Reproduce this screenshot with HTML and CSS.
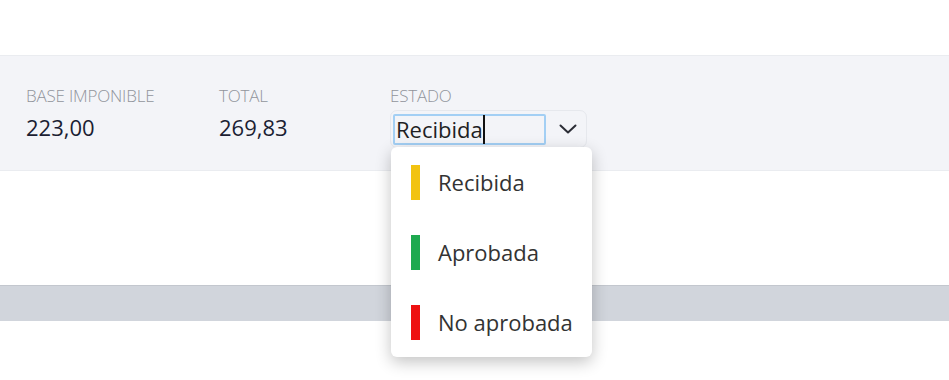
FILE: index.html
```html
<!DOCTYPE html>
<html lang="es">
<head>
    <meta charset="UTF-8">
    <title>Factura</title>
    <link rel="stylesheet" href="styles.css">
</head>
<body>
    <div class="top-space"></div>

    <div class="summary">
        <div class="field field-base">
            <div class="field-label">BASE IMPONIBLE</div>
            <div class="field-value">223,00</div>
        </div>
        <div class="field field-total">
            <div class="field-label">TOTAL</div>
            <div class="field-value">269,83</div>
        </div>
        <div class="field field-estado">
            <div class="field-label">ESTADO</div>
            <div class="select">
                <div class="select-input">Recibida<span class="caret"></span></div>
                <svg class="chevron" width="18" height="10" viewBox="0 0 18 10">
                    <path d="M1.5 1.5 L9 8.5 L16.5 1.5" fill="none" stroke="#2b2d36" stroke-width="2" stroke-linecap="round" stroke-linejoin="round"/>
                </svg>
            </div>
            <ul class="dropdown">
                <li class="option"><span class="mark mark-yellow"></span>Recibida</li>
                <li class="option"><span class="mark mark-green"></span>Aprobada</li>
                <li class="option"><span class="mark mark-red"></span>No aprobada</li>
            </ul>
        </div>
    </div>

    <div class="gap"></div>
    <div class="footer-bar"></div>
</body>
</html>
```

FILE: styles.css
```css
html, body {
    min-height: 100vh;
}

body {
    margin: 0;
    font-family: "Open Sans", "Noto Sans", sans-serif;
    background-color: #fff;
}

.top-space {
    height: 55px;
}

.summary {
    display: grid;
    grid-template-columns: 193px 171px 1fr;
    background-color: #f3f4f8;
    border-top: 1px solid #eaecf0;
    border-bottom: 1px solid #eaecf0;
    padding: 30px 26px 0;
    height: 84px;
}

.field {
    position: relative;
}

.field-label {
    font-size: 17px;
    font-weight: 300;
    color: #91949c;
    line-height: 20px;
    letter-spacing: -0.2px;
}

.field-value {
    font-size: 22px;
    font-weight: 500;
    color: #1b1e33;
    line-height: 30px;
    margin-top: 6px;
}

.select {
    display: flex;
    align-items: center;
    width: 197px;
    height: 38px;
    margin-top: 4px;
    border: 1px solid #e6e8ed;
    border-radius: 7px;
    box-sizing: border-box;
    padding-left: 2px;
}

.select-input {
    width: 153px;
    height: 31px;
    box-sizing: border-box;
    border: 2px solid #a3cff4;
    border-radius: 2px;
    font-size: 22px;
    color: #1f1f24;
    padding-left: 1px;
    display: flex;
    align-items: center;
}

.caret {
    display: inline-block;
    width: 2px;
    height: 29px;
    background-color: #111;
    margin-left: 0;
}

.chevron {
    margin-left: 13px;
}

.dropdown {
    position: absolute;
    left: 1px;
    top: 61px;
    width: 201px;
    margin: 0;
    padding: 0;
    list-style: none;
    background-color: #fff;
    border-radius: 6px;
    box-shadow: 0 5px 16px rgba(0, 0, 0, 0.24);
    z-index: 2;
}

.option {
    display: flex;
    align-items: center;
    height: 70px;
    padding-left: 20px;
    font-size: 22px;
    color: #333;
}

.mark {
    display: inline-block;
    width: 9px;
    height: 35px;
    margin-right: 18px;
}

.mark-yellow {
    background-color: #f2c311;
}

.mark-green {
    background-color: #1ea94f;
}

.mark-red {
    background-color: #ee1111;
}

.gap {
    height: 114px;
}

.footer-bar {
    height: 35px;
    background-color: #d1d5dc;
    border-top: 1px solid #c3c7ce;
}
```
